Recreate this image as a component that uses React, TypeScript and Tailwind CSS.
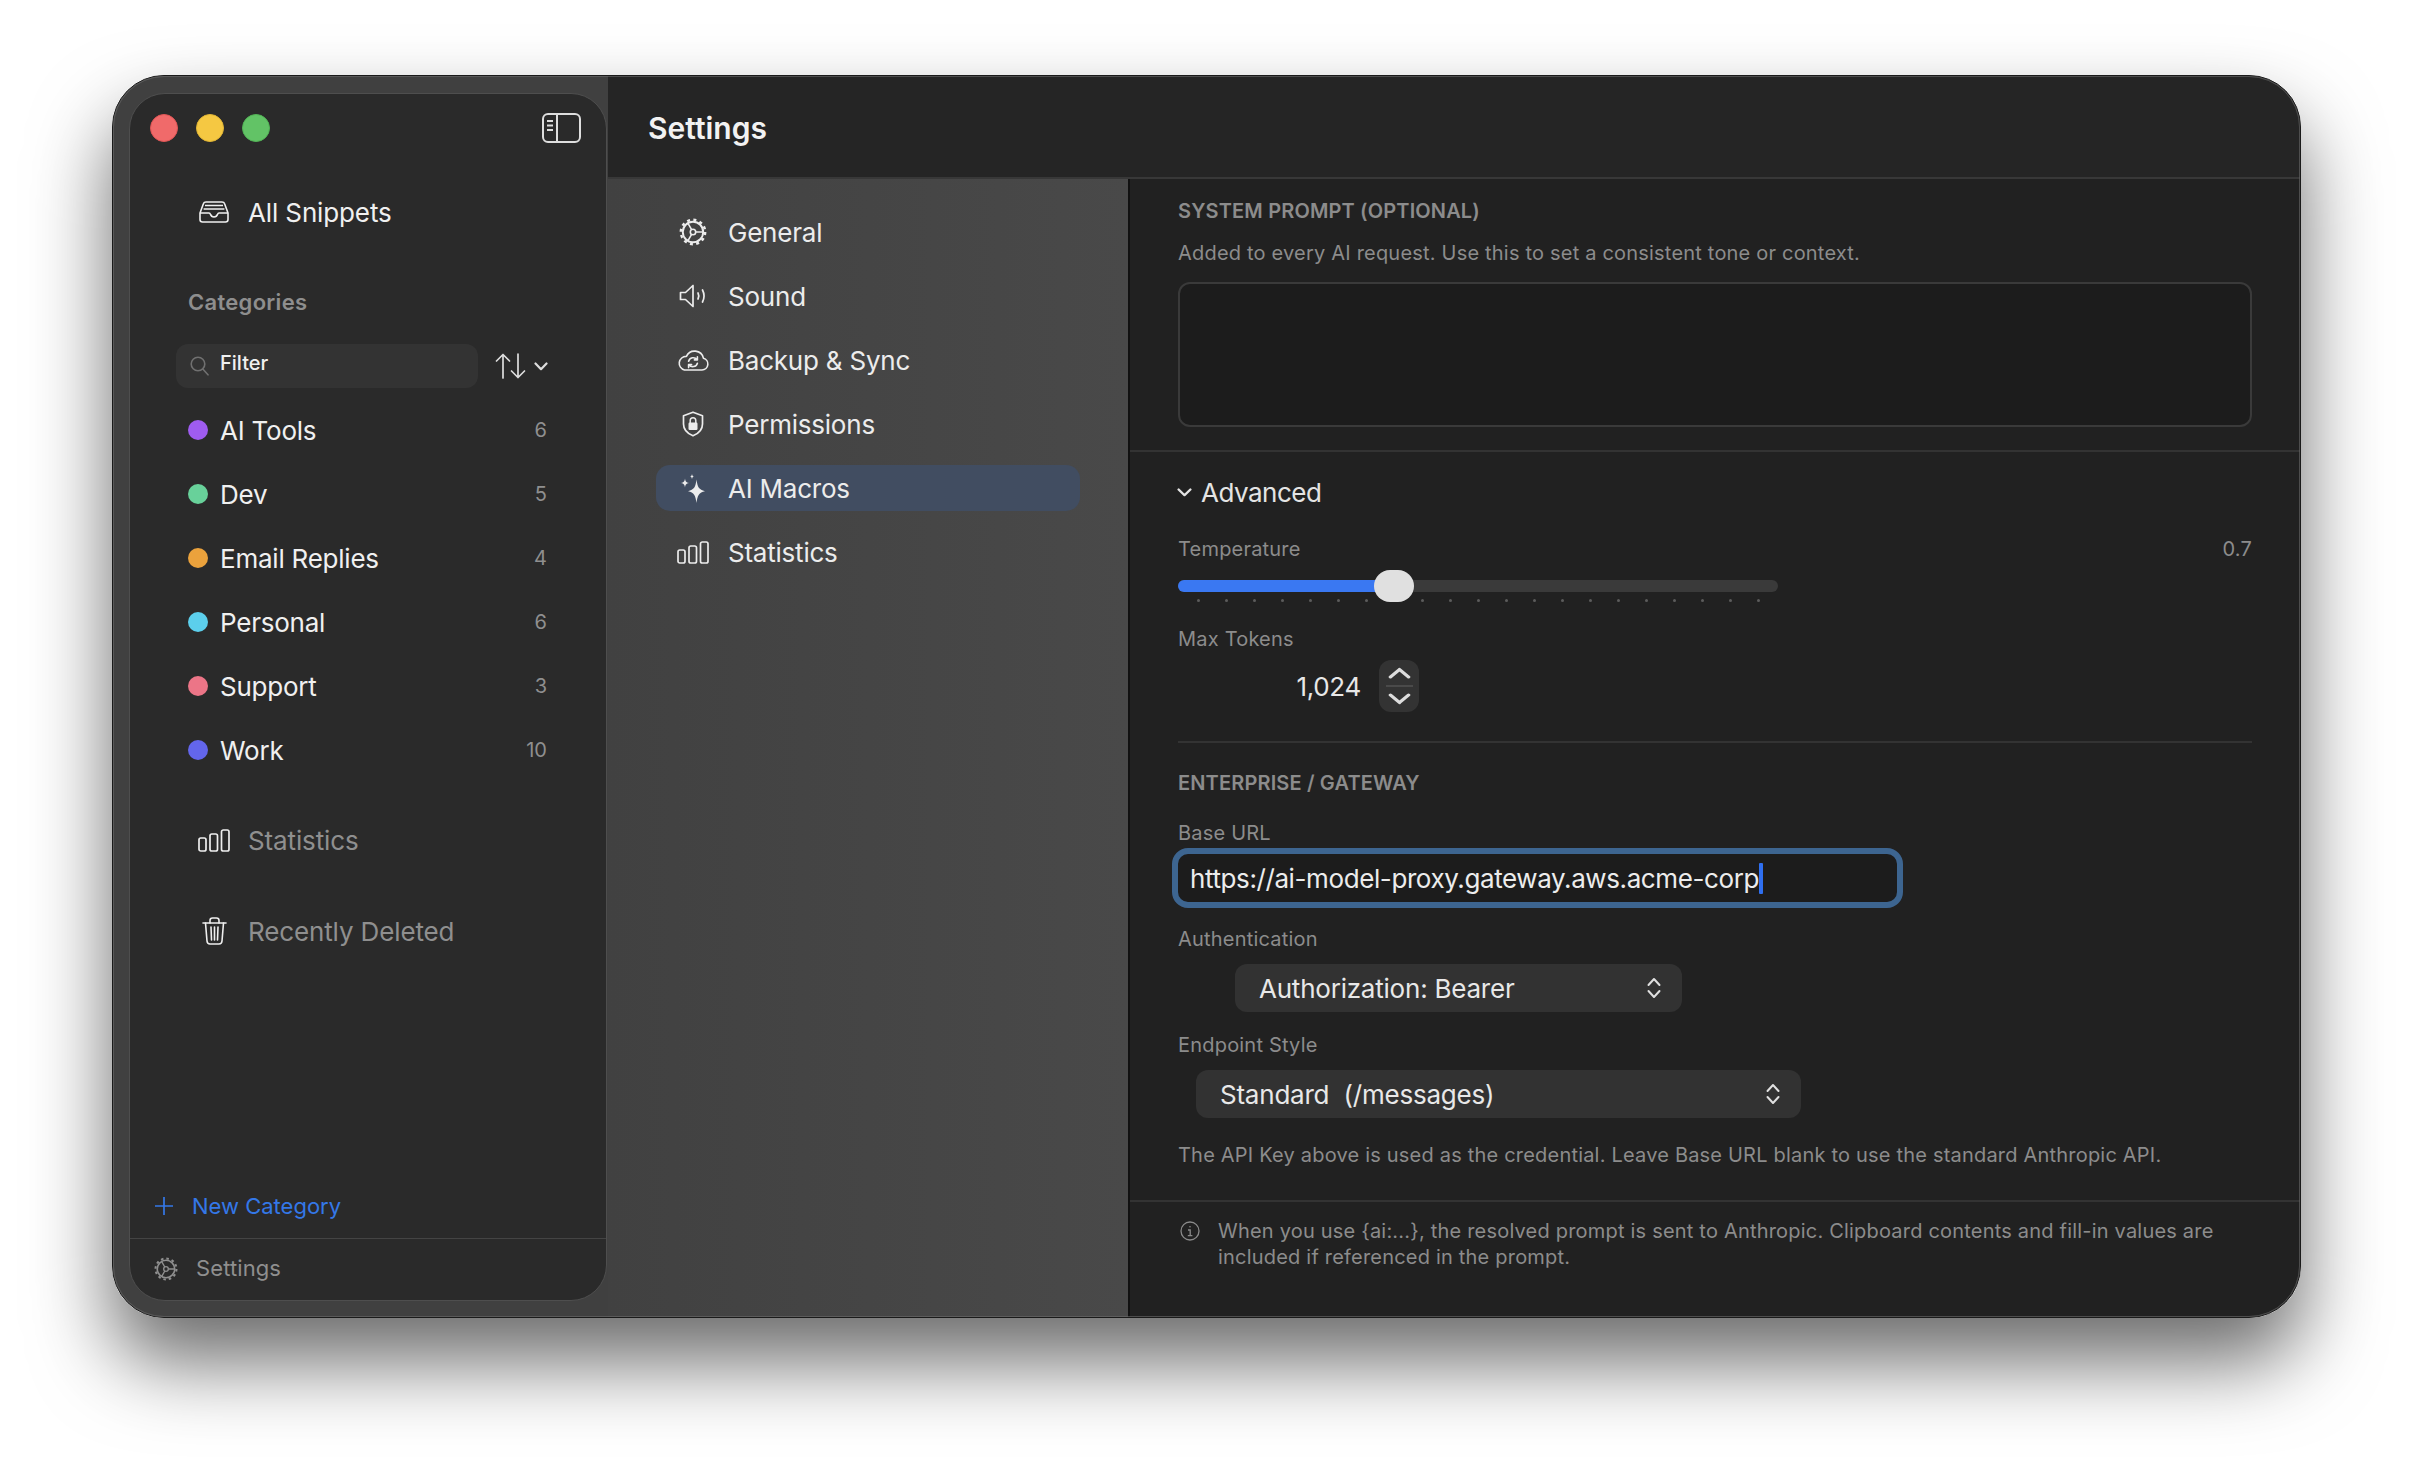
import React from 'react';

const categories = [
  { name: 'AI Tools', count: 6, dot: 'bg-[#9f5cf0]' },
  { name: 'Dev', count: 5, dot: 'bg-[#68d19a]' },
  { name: 'Email Replies', count: 4, dot: 'bg-[#eba23c]' },
  { name: 'Personal', count: 6, dot: 'bg-[#5ccfec]' },
  { name: 'Support', count: 3, dot: 'bg-[#ec7587]' },
  { name: 'Work', count: 10, dot: 'bg-[#6366ec]' }
];

const Gear = ({ size = 28 }: { size?: number }) => (
  <svg width={size} height={size} viewBox="0 0 28 28" fill="none" stroke="currentColor" strokeWidth="1.9">
    <circle cx="14" cy="14" r="10.2" />
    <circle cx="14" cy="14" r="12.2" strokeWidth="2.4" strokeDasharray="3 3.39" />
    <circle cx="14" cy="14" r="2.7" strokeWidth="1.6" />
    <path d="M16.7 14H24M12.6 16.35L9 22.7M12.6 11.65L9 5.3" strokeWidth="1.6" />
  </svg>
);

const Speaker = () => (
  <svg width="28" height="24" viewBox="0 0 28 24" fill="none" stroke="currentColor" strokeWidth="1.7" strokeLinejoin="round" strokeLinecap="round">
    <path d="M1.5 8.5H6.5L14 1.5V22.5L6.5 15.5H1.5Z" />
    <path d="M19 9Q20.6 12 19 15" />
    <path d="M23.5 6Q26.6 12 23.5 18" />
  </svg>
);

const CloudSync = () => (
  <svg width="32" height="22" viewBox="0 0 32 22" fill="none" stroke="currentColor" strokeWidth="1.6" strokeLinecap="round" strokeLinejoin="round">
    <path d="M7.5 21H25A6 6 0 0 0 26.4 9.2A9 9 0 0 0 9.4 7.4A6.9 6.9 0 0 0 7.5 21Z" />
    <path d="M11.6 12.2A4.8 4.8 0 0 1 20 10.6M20.4 7.8V10.9H17.4" />
    <path d="M20.4 14.2A4.8 4.8 0 0 1 12 15.8M11.6 18.6V15.5H14.6" />
  </svg>
);

const ShieldLock = () => (
  <svg width="22" height="26" viewBox="0 0 22 26" fill="none" stroke="currentColor" strokeWidth="1.7" strokeLinejoin="round">
    <path d="M11 1.2L20.5 4.8V13C20.5 19 16 22.8 11 24.8C6 22.8 1.5 19 1.5 13V4.8Z" />
    <path d="M8.2 12V9.6A2.8 2.8 0 0 1 13.8 9.6V12" strokeWidth="1.5" />
    <rect x="6.5" y="11.5" width="9" height="7.5" rx="1.2" fill="currentColor" stroke="none" />
  </svg>
);

const Sparkles = () => (
  <svg width="24" height="29" viewBox="0 0 24 29" fill="currentColor">
    <path d="M15.5 5.5C16.4 13 18 15.8 24 17.2C18 18.6 16.4 21.4 15.5 29C14.6 21.4 13 18.6 7 17.2C13 15.8 14.6 13 15.5 5.5Z" />
    <path d="M11 0C11.3 1.8 11.7 2.2 13 2.6C11.7 3 11.3 3.4 11 5.2C10.7 3.4 10.3 3 9 2.6C10.3 2.2 10.7 1.8 11 0Z" />
    <path d="M4 4.5C4.4 7.5 5 8.2 8 9C5 9.8 4.4 10.5 4 13.5C3.6 10.5 3 9.8 0 9C3 8.2 3.6 7.5 4 4.5Z" />
  </svg>
);

const Bars = () => (
  <svg width="32" height="23" viewBox="0 0 32 23" fill="none" stroke="currentColor" strokeWidth="1.7">
    <rect x="1" y="9" width="7" height="13" rx="1.8" />
    <rect x="12" y="5" width="7.5" height="17" rx="1.8" />
    <rect x="23.5" y="1" width="7.5" height="21" rx="1.8" />
  </svg>
);

const Tray = () => (
  <svg width="30" height="22" viewBox="0 0 30 22" fill="none" stroke="currentColor" strokeWidth="1.6" strokeLinejoin="round">
    <path d="M1 12L4.5 2.5Q5 1 7 1H23Q25 1 25.5 2.5L29 12V18.5Q29 21 26.5 21H3.5Q1 21 1 18.5Z" />
    <path d="M1 12H10Q11 12 11.3 13Q12.3 16 15 16Q17.7 16 18.7 13Q19 12 20 12H29" />
    <path d="M6 4.5H24M4.6 8H25.4" />
  </svg>
);

const Trash = () => (
  <svg width="25" height="28" viewBox="0 0 25 28" fill="none" stroke="currentColor" strokeWidth="1.6" strokeLinecap="round" strokeLinejoin="round">
    <path d="M1 6H24" />
    <path d="M8 6V3.5Q8 1 10.5 1H14.5Q17 1 17 3.5V6" />
    <path d="M3.5 6L5 24Q5.3 27 8 27H17Q19.7 27 20 24L21.5 6" />
    <path d="M9 10L9.5 23M12.5 10V23M16 10L15.5 23" />
  </svg>
);

const SidebarToggle = () => (
  <svg width="39" height="30" viewBox="0 0 39 30" fill="none" stroke="currentColor" strokeWidth="2">
    <rect x="1" y="1" width="37" height="28" rx="5" />
    <path d="M15 1V29" />
    <path d="M5 8H11M5 12.5H11M5 17H11" />
  </svg>
);

const Search = () => (
  <svg width="19" height="20" viewBox="0 0 19 20" fill="none" stroke="#707070" strokeWidth="1.6" strokeLinecap="round">
    <circle cx="8" cy="8" r="6.8" />
    <path d="M13 13.2L18 18.8" />
  </svg>
);

const SortArrows = () => (
  <svg width="31" height="26" viewBox="0 0 31 26" fill="none" stroke="#dddddd" strokeWidth="1.7" strokeLinecap="round" strokeLinejoin="round">
    <path d="M8 25V1.5M1.5 8L8 1.5L14.5 8" />
    <path d="M23 1V24.5M16.5 18L23 24.5L29.5 18" />
  </svg>
);

const Chevron = ({ w = 14, h = 9 }: { w?: number; h?: number }) => (
  <svg width={w} height={h} viewBox="0 0 14 9" fill="none" stroke="currentColor" strokeWidth="2.2" strokeLinecap="round" strokeLinejoin="round" preserveAspectRatio="none">
    <path d="M1.5 1.5L7 7.2L12.5 1.5" />
  </svg>
);

const UpDown = () => (
  <svg width="16" height="22" viewBox="0 0 16 22" fill="none" stroke="#e0e0e0" strokeWidth="2" strokeLinecap="round" strokeLinejoin="round">
    <path d="M2.5 8L8 2L13.5 8" />
    <path d="M2.5 14L8 20L13.5 14" />
  </svg>
);

const InfoCircle = () => (
  <svg width="20" height="20" viewBox="0 0 20 20" fill="none" stroke="#8a8a8a" strokeWidth="1.3">
    <circle cx="10" cy="10" r="9" />
    <path d="M8 9H10.2V14.6M7.8 14.6H12.4" />
    <circle cx="10" cy="5.8" r="0.8" fill="#8a8a8a" stroke="none" />
  </svg>
);

const SelectBox = ({ label, className }: { label: string; className: string }) => (
  <div className={`flex h-[48px] items-center justify-between rounded-[12px] bg-[#323232] pl-[24px] pr-[20px] text-[26px] tracking-[-0.22px] text-[#e8e8e8] whitespace-pre ${className}`}>
    <span>{label}</span>
    <UpDown />
  </div>
);

const FieldLabel = ({ children, className = '' }: { children: React.ReactNode; className?: string }) => (
  <div className={`h-[24px] text-[20px] leading-[24px] tracking-[0.2px] text-[#8c8c8c] ${className}`}>{children}</div>
);

const SectionHead = ({ children, className = '' }: { children: React.ReactNode; className?: string }) => (
  <div className={`h-[24px] text-[20px] font-semibold leading-[24px] tracking-[0.15px] text-[#8c8c8c] ${className}`}>{children}</div>
);

const navItems = [
  { name: 'General', icon: <Gear /> },
  { name: 'Sound', icon: <Speaker /> },
  { name: 'Backup & Sync', icon: <CloudSync /> },
  { name: 'Permissions', icon: <ShieldLock /> },
  { name: 'AI Macros', icon: <Sparkles />, active: true },
  { name: 'Statistics', icon: <Bars /> }
];

const Sidebar = () => (
  <div className="flex w-[495px] shrink-0 flex-col bg-[#404040] pb-[16px] pl-[16px] pr-[1px] pt-[17px]">
    <div className="flex flex-1 flex-col rounded-[36px] border border-[#4e4e4e] bg-[#2a2a2a]">
      <div className="flex h-[69px] items-center justify-between pb-[2px] pl-[20px] pr-[25px]">
        <div className="flex gap-[18px]">
          <div className="h-[28px] w-[28px] rounded-full border border-[#e05555] bg-[#f06a6a]" />
          <div className="h-[28px] w-[28px] rounded-full border border-[#e0b535] bg-[#f5c842]" />
          <div className="h-[28px] w-[28px] rounded-full border border-[#52b356] bg-[#62c366]" />
        </div>
        <div className="text-[#dedede]">
          <SidebarToggle />
        </div>
      </div>

      <div className="mt-[18px] flex h-[64px] items-center gap-[18px] pb-[2px] pl-[68px] text-[26px] tracking-[-0.13px] text-[#f0f0f0]">
        <div className="flex w-[32px] justify-center">
          <Tray />
        </div>
        All Snippets
      </div>

      <div className="mt-[42px] h-[30px] pl-[58px] text-[22px] font-semibold leading-[30px] tracking-[0.3px] text-[#8e8e8e]">Categories</div>

      <div className="mt-[27px] flex items-center pl-[46px]">
        <div className="flex h-[44px] w-[302px] items-center gap-[11px] rounded-[12px] bg-[#333333] pl-[14px]">
          <Search />
          <span className="-mt-[6px] text-[20px] font-medium text-[#f0f0f0]">Filter</span>
        </div>
        <div className="ml-[17px] text-[#dddddd]">
          <SortArrows />
        </div>
        <div className="ml-[8px] text-[#dddddd]">
          <Chevron />
        </div>
      </div>

      <div className="mt-[10px]">
        {categories.map(({ name, count, dot }) => (
          <div key={name} className="flex h-[64px] items-center gap-[12px] pl-[58px] pr-[59px]">
            <div className={`h-[20px] w-[20px] rounded-full ${dot}`} />
            <span className="flex-1 text-[26px] tracking-[-0.23px] text-[#f0f0f0]">{name}</span>
            <span className="text-[20px] text-[#8f8f8f]">{count}</span>
          </div>
        ))}
      </div>

      <div className="mt-[27px] flex h-[64px] items-center gap-[18px] pb-[2px] pl-[68px] text-[26px] tracking-[-0.13px] text-[#8f8f8f]">
        <div className="flex w-[32px] justify-center text-[#eeeeee]">
          <Bars />
        </div>
        Statistics
      </div>
      <div className="mt-[27px] flex h-[64px] items-center gap-[18px] pb-[2px] pl-[68px] text-[26px] tracking-[-0.13px] text-[#8f8f8f]">
        <div className="flex w-[32px] justify-center text-[#eeeeee]">
          <Trash />
        </div>
        Recently Deleted
      </div>

      <div className="flex-1" />

      <div className="flex h-[60px] items-center gap-[19px] pb-[4px] pl-[25px] text-[22px] text-[#3478e8]">
        <svg width="18" height="18" viewBox="0 0 18 18" fill="none" stroke="currentColor" strokeWidth="1.7">
          <path d="M9 0V18M0 9H18" />
        </svg>
        New Category
      </div>
      <div className="flex h-[62px] items-center gap-[18px] border-t border-[#444444] pb-[2px] pl-[24px] text-[22px] tracking-[0.1px] text-[#8f8f8f]">
        <Gear size={24} />
        Settings
      </div>
    </div>
  </div>
);

const NavColumn = () => (
  <div className="w-[522px] shrink-0 border-r-2 border-[#111111] bg-gradient-to-r from-[#414141] to-[#494949] pt-[22px]">
    {navItems.map(({ name, icon, active }) => (
      <div key={name} className="ml-[48px] flex h-[64px] w-[424px] items-center pb-[2px]">
        <div className={`flex h-[46px] w-full items-center gap-[18px] rounded-[14px] pl-[20px] text-[26px] tracking-[-0.22px] text-[#ececec] ${active ? 'bg-[#414d61]' : ''}`}>
          <div className="flex w-[34px] justify-center">{icon}</div>
          {name}
        </div>
      </div>
    ))}
  </div>
);

const TemperatureSlider = () => (
  <div className="relative mt-[9px] h-[32px] w-[600px]">
    <div className="absolute left-0 right-0 top-[10px] h-[12px] rounded-full bg-[#3a3a3a]" />
    <div className="absolute left-0 top-[10px] h-[12px] w-[216px] rounded-l-full bg-[#3a78f2]" />
    <div className="absolute left-[19px] top-[29px] flex w-[563px] justify-between">
      {Array.from({ length: 21 }).map((_, i) => (
        <div key={i} className="h-[3px] w-[3px] rounded-full bg-[#5c5c5c]" />
      ))}
    </div>
    <div className="absolute left-[196px] top-0 h-[32px] w-[40px] rounded-full bg-[#e0e0e0]" />
  </div>
);

const Pane = () => (
  <div className="flex min-w-0 flex-1 flex-col bg-[#212121]">
    <div className="border-b-2 border-[#333333] px-[48px] pb-[23px] pt-[20px]">
      <SectionHead>SYSTEM PROMPT (OPTIONAL)</SectionHead>
      <FieldLabel className="mt-[18px]">Added to every AI request. Use this to set a consistent tone or context.</FieldLabel>
      <div className="mt-[17px] h-[145px] rounded-[12px] border-2 border-[#3a3a3a] bg-[#1c1c1c]" />
    </div>

    <div className="border-b-2 border-[#333333] px-[48px] pb-[33px] pt-[25px]">
      <div className="-ml-[1px] flex h-[32px] items-center gap-[9px] pb-[2px] text-[26px] tracking-[-0.5px] text-[#e4e4e4]">
        <Chevron w={15} h={9} />
        Advanced
      </div>

      <div className="mt-[28px] flex justify-between">
        <FieldLabel>Temperature</FieldLabel>
        <FieldLabel>0.7</FieldLabel>
      </div>
      <TemperatureSlider />

      <FieldLabel className="mt-[25px]">Max Tokens</FieldLabel>
      <div className="mt-[9px] flex w-[241px] items-center justify-end gap-[18px]">
        <span className="text-[26px] tracking-[-0.3px] text-[#e8e8e8]">1,024</span>
        <div className="flex h-[52px] w-[40px] flex-col items-center justify-center rounded-[12px] bg-[#333333] text-[#dddddd]">
          <div className="rotate-180">
            <Chevron w={23} h={12} />
          </div>
          <div className="my-[6px] h-[2px] w-[27px] bg-[#4a4a4a]" />
          <Chevron w={23} h={12} />
        </div>
      </div>

      <div className="mt-[29px] h-[2px] bg-[#333333]" />

      <SectionHead className="mt-[28px]">ENTERPRISE / GATEWAY</SectionHead>

      <FieldLabel className="mt-[26px]">Base URL</FieldLabel>
      <div className="-ml-[6px] mt-[3px] flex h-[60px] w-[731px] items-center rounded-[16px] border-[6px] border-[#3d6590] bg-[#1c1c1c] pl-[12px] text-[26px] tracking-[-0.4px] text-[#ececec]">
        https://ai-model-proxy.gateway.aws.acme-corp
        <span className="h-[31px] w-[4px] rounded-[1px] bg-[#2f6ff0]" />
      </div>

      <FieldLabel className="mt-[19px]">Authentication</FieldLabel>
      <SelectBox label="Authorization: Bearer" className="ml-[57px] mt-[13px] w-[447px]" />

      <FieldLabel className="mt-[21px]">Endpoint Style</FieldLabel>
      <SelectBox label="Standard  (/messages)" className="ml-[18px] mt-[13px] w-[605px]" />

      <FieldLabel className="mt-[25px]">The API Key above is used as the credential. Leave Base URL blank to use the standard Anthropic API.</FieldLabel>
    </div>

    <div className="flex gap-[18px] pl-[50px] pr-[48px] pt-[16px] text-[20px] leading-[26px] tracking-[0.2px] text-[#8c8c8c]">
      <div className="mt-[3px] shrink-0">
        <InfoCircle />
      </div>
      <p>When you use {'{ai:...}'}, the resolved prompt is sent to Anthropic. Clipboard contents and fill-in values are included if referenced in the prompt.</p>
    </div>
  </div>
);

export default function App() {
  return (
    <div className="h-[1466px] w-[2412px] overflow-hidden bg-white pl-[112px] pt-[75px] antialiased [font-family:Inter,sans-serif]">
      <div className="relative h-[1243px] w-[2189px] rounded-[52px] shadow-[0_44px_80px_rgba(0,0,0,0.58)]">
        <div className="flex h-full w-full overflow-hidden rounded-[52px] border border-[#1a1a1a] bg-[#404040]">
          <Sidebar />
          <div className="flex min-w-0 flex-1 flex-col">
            <div className="flex h-[103px] shrink-0 items-center border-b-2 border-[#383838] bg-[#252525] pl-[40px] pt-[3px] text-[30px] font-semibold text-[#f2f2f2]">
              Settings
            </div>
            <div className="flex min-h-0 flex-1">
              <NavColumn />
              <Pane />
            </div>
          </div>
        </div>
        <div className="pointer-events-none absolute inset-[1px] rounded-[51px] border border-[#6a6a6a]/60" />
      </div>
    </div>
  );
}
